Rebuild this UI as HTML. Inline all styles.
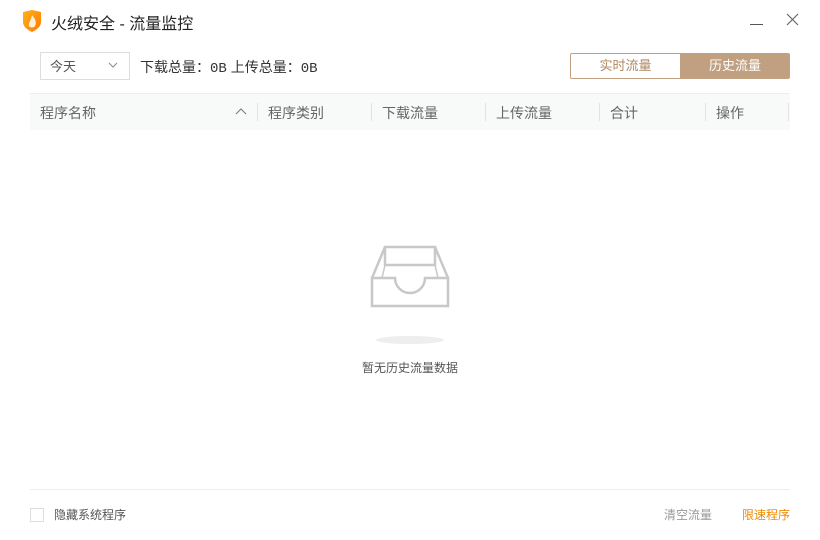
<!DOCTYPE html>
<html><head><meta charset="utf-8"><style>
*{margin:0;padding:0;box-sizing:border-box}
body{width:820px;height:540px;background:#fff;font-family:"Liberation Sans","Noto Sans CJK SC",sans-serif;position:relative;overflow:hidden;color:#333}
.a{position:absolute;white-space:nowrap}
.m{font-family:"Liberation Mono",monospace}
</style></head><body>
<svg class="a" style="left:22px;top:10px" width="20" height="22" viewBox="0 0 20 22">
<defs><linearGradient id="g" x1="0" y1="0" x2="1" y2="1"><stop offset="0" stop-color="#ffb21a"/><stop offset="1" stop-color="#ff7a00"/></linearGradient></defs>
<path d="M1 2 L10 0 L19 2 L19 12 C19 17 14 20 10 22 C6 20 1 17 1 12 Z" fill="url(#g)"/>
<path d="M10 5 C13 9 15 12 13 16 C12 18 8 18 7 16 C6 13 9 11 10 5 Z" fill="#fff" opacity=".85"/>
</svg>
<div class="a" style="left:51px;top:10px;font-size:16px;color:#222">火绒安全 - 流量监控</div>
<div class="a" style="left:750px;top:24px;width:13px;height:1px;background:#555"></div>
<svg class="a" style="left:786px;top:13px" width="13" height="13"><path d="M1 1L12 12M12 1L1 12" stroke="#666" stroke-width="1.2"/></svg>

<div class="a" style="left:40px;top:52px;width:90px;height:28px;border:1px solid #ddd"></div>
<div class="a" style="left:50px;top:56px;font-size:13px;color:#555">今天</div>
<svg class="a" style="left:108px;top:62px" width="10" height="6"><path d="M1 1L5 5L9 1" stroke="#888" fill="none"/></svg>
<div class="a" style="left:140px;top:57px;font-size:14px;color:#333">下载总量：<span class="m">0B</span>&nbsp;上传总量：<span class="m">0B</span></div>

<div class="a" style="left:570px;top:53px;width:220px;height:26px;border:1px solid #c0a080;border-radius:2px;overflow:hidden">
<div style="position:absolute;left:0;top:0;width:109px;height:24px;background:#fff;color:#b08a60;font-size:13px;text-align:center;line-height:24px">实时流量</div>
<div style="position:absolute;left:109px;top:0;width:110px;height:24px;background:#c0a080;color:#fff;font-size:13px;text-align:center;line-height:24px">历史流量</div>
</div>

<div class="a" style="left:30px;top:93px;width:760px;height:37px;background:#f8f9f9;border-top:1px solid #eee"></div>
<div class="a" style="left:40px;top:103px;font-size:14px;color:#666">程序名称</div>
<svg class="a" style="left:235px;top:108px" width="12" height="7"><path d="M1 6L6 1L11 6" stroke="#777" fill="none"/></svg>
<div class="a" style="left:268px;top:103px;font-size:14px;color:#666">程序类别</div>
<div class="a" style="left:382px;top:103px;font-size:14px;color:#666">下载流量</div>
<div class="a" style="left:496px;top:103px;font-size:14px;color:#666">上传流量</div>
<div class="a" style="left:610px;top:103px;font-size:14px;color:#666">合计</div>
<div class="a" style="left:716px;top:103px;font-size:14px;color:#666">操作</div>
<div class="a" style="left:257px;top:103px;width:1px;height:18px;background:#e2e2e2"></div>
<div class="a" style="left:371px;top:103px;width:1px;height:18px;background:#e2e2e2"></div>
<div class="a" style="left:485px;top:103px;width:1px;height:18px;background:#e2e2e2"></div>
<div class="a" style="left:599px;top:103px;width:1px;height:18px;background:#e2e2e2"></div>
<div class="a" style="left:705px;top:103px;width:1px;height:18px;background:#e2e2e2"></div>
<div class="a" style="left:788px;top:103px;width:1px;height:18px;background:#e2e2e2"></div>

<svg class="a" style="left:370px;top:245px" width="80" height="65" viewBox="0 0 80 65">
<g stroke="#c8c8c8" stroke-width="2.5" fill="none">
<path d="M15 2H65V20H15Z"/>
<path d="M15 2L2 33M65 2L78 33"/>
<path d="M2 33H25A15 15 0 0 0 55 33H78V61H2Z"/>
<path d="M15 20L12 33M65 20L68 33" stroke-width="1.5"/>
</g></svg>
<div class="a" style="left:376px;top:336px;width:68px;height:8px;border-radius:50%;background:#eee"></div>
<div class="a" style="left:362px;top:359px;font-size:12px;color:#555">暂无历史流量数据</div>

<div class="a" style="left:30px;top:489px;width:760px;height:1px;background:#eee"></div>
<div class="a" style="left:30px;top:508px;width:14px;height:14px;border:1px solid #ddd"></div>
<div class="a" style="left:54px;top:506px;font-size:12px;color:#555">隐藏系统程序</div>
<div class="a" style="left:664px;top:506px;font-size:12px;color:#999">清空流量</div>
<div class="a" style="left:742px;top:506px;font-size:12px;color:#f08a00">限速程序</div>
</body></html>
